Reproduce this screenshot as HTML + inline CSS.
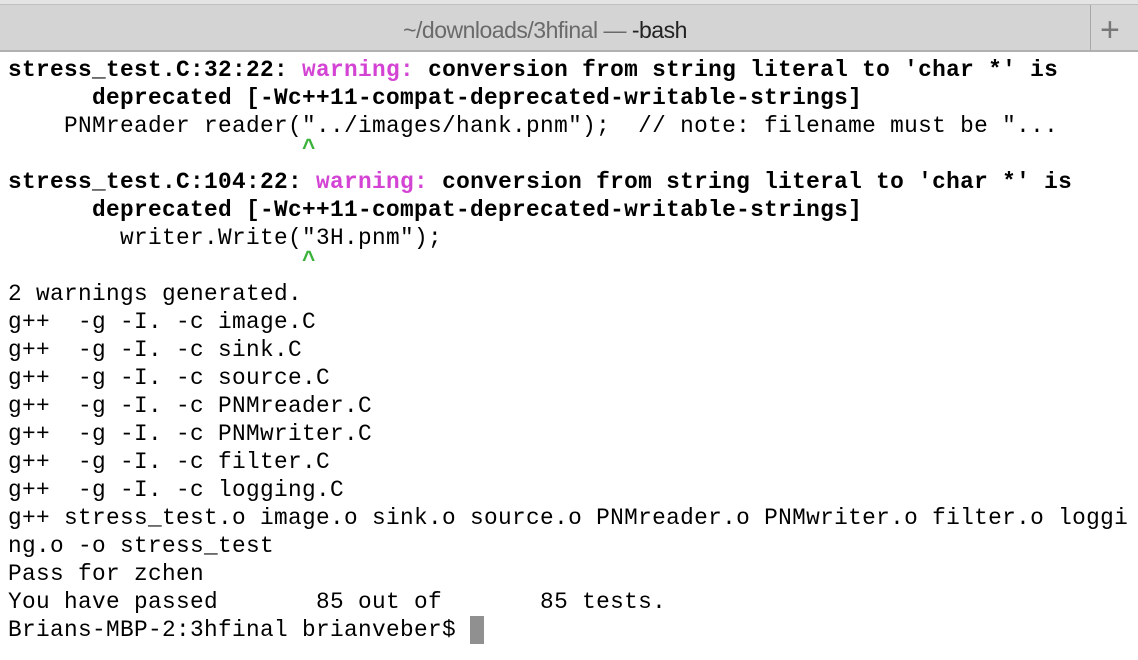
<!DOCTYPE html>
<html><head><meta charset="utf-8"><style>
html,body{margin:0;padding:0;background:#fff;width:1138px;height:660px;overflow:hidden}
.tb{position:absolute;left:0;top:0;width:1138px;height:52px;background:#d6d6d6}
.tb .top{position:absolute;left:0;top:0;width:1138px;height:4px;background:#e4e4e4;border-bottom:1px solid #c0c0c0}
.tb .tab{position:absolute;left:0;top:5px;width:1090px;height:45px;background:#d4d4d4;border-right:1px solid #a8a8a8}
.tb .bot{position:absolute;left:0;top:50px;width:1138px;height:2px;background:#b0b0b0}
.title{position:absolute;left:0;width:1090px;top:17px;text-align:center;font:23px "Liberation Sans",sans-serif;color:#6a6a6a;letter-spacing:-0.5px}
.title b{font-weight:normal;color:#222}
.plus{position:absolute;left:1100px;top:11px;font:34px "Liberation Sans",sans-serif;color:#777;font-weight:300}
pre{position:absolute;left:8px;top:56px;margin:0;font:22.77px/28px "Liberation Mono",monospace;letter-spacing:0.34px;color:#000}
.b{font-weight:bold}
.m{color:#d444d4;font-weight:bold}
.g{color:#3bb33b;font-weight:bold;position:relative;top:-5px}
.cur{display:inline-block;width:14px;height:28px;background:#909090;vertical-align:top}
</style></head><body>
<div class="tb"><div class="top"></div><div class="tab"></div><div class="bot"></div>
<div class="title">~/downloads/3hfinal — <b>-bash</b></div><div class="plus">+</div></div>
<pre><span class="b">stress_test.C:32:22: </span><span class="m">warning:</span><span class="b"> conversion from string literal to 'char *' is
      deprecated [-Wc++11-compat-deprecated-writable-strings]</span>
    PNMreader reader("../images/hank.pnm");  // note: filename must be "...
                     <span class="g">^</span>
<span class="b">stress_test.C:104:22: </span><span class="m">warning:</span><span class="b"> conversion from string literal to 'char *' is
      deprecated [-Wc++11-compat-deprecated-writable-strings]</span>
        writer.Write("3H.pnm");
                     <span class="g">^</span>
2 warnings generated.
g++  -g -I. -c image.C
g++  -g -I. -c sink.C
g++  -g -I. -c source.C
g++  -g -I. -c PNMreader.C
g++  -g -I. -c PNMwriter.C
g++  -g -I. -c filter.C
g++  -g -I. -c logging.C
g++ stress_test.o image.o sink.o source.o PNMreader.o PNMwriter.o filter.o loggi
ng.o -o stress_test
Pass for zchen
You have passed       85 out of       85 tests.
Brians-MBP-2:3hfinal brianveber$ <span class="cur"></span></pre>
</body></html>
